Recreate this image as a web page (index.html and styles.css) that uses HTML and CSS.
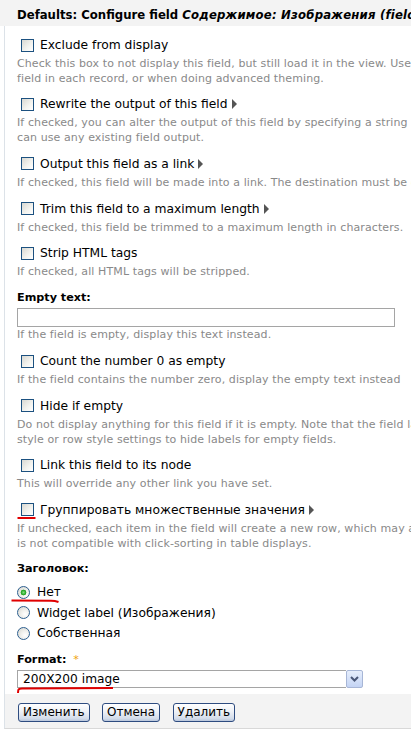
FILE: index.html
```html
<!DOCTYPE html>
<html lang="ru">
<head>
<meta charset="utf-8">
<title>Configure field</title>
<link rel="stylesheet" href="styles.css">
</head>
<body>
<div class="dialog">
  <h2 class="title">Defaults: Configure field <em>Содержимое: Изображения (field_images)</em></h2>
  <div class="panel">
    <div class="form">
      <div class="item">
        <label class="check"><span class="cb"></span>Exclude from display</label>
        <div class="desc">Check this box to not display this field, but still load it in the view. Use this option to not show a grouping<br>field in each record, or when doing advanced theming.</div>
      </div>
      <div class="item">
        <label class="check"><span class="cb"></span>Rewrite the output of this field<svg class="arrow" width="6" height="10" viewBox="0 0 6 10"><path d="M0 0 L5 5 L0 10 Z" fill="#555"/></svg></label>
        <div class="desc">If checked, you can alter the output of this field by specifying a string of text with replacement tokens that<br>can use any existing field output.</div>
      </div>
      <div class="item">
        <label class="check"><span class="cb"></span>Output this field as a link<svg class="arrow" width="6" height="10" viewBox="0 0 6 10"><path d="M0 0 L5 5 L0 10 Z" fill="#555"/></svg></label>
        <div class="desc">If checked, this field will be made into a link. The destination must be given below.</div>
      </div>
      <div class="item">
        <label class="check"><span class="cb"></span>Trim this field to a maximum length<svg class="arrow" width="6" height="10" viewBox="0 0 6 10"><path d="M0 0 L5 5 L0 10 Z" fill="#555"/></svg></label>
        <div class="desc">If checked, this field be trimmed to a maximum length in characters.</div>
      </div>
      <div class="item">
        <label class="check"><span class="cb"></span>Strip HTML tags</label>
        <div class="desc">If checked, all HTML tags will be stripped.</div>
      </div>
      <div class="item">
        <div class="label">Empty text:</div>
        <input class="text-input" type="text">
        <div class="desc tight">If the field is empty, display this text instead.</div>
      </div>
      <div class="item">
        <label class="check"><span class="cb"></span>Count the number 0 as empty</label>
        <div class="desc">If the field contains the number zero, display the empty text instead</div>
      </div>
      <div class="item">
        <label class="check"><span class="cb"></span>Hide if empty</label>
        <div class="desc">Do not display anything for this field if it is empty. Note that the field label may still be displayed. Check<br>style or row style settings to hide labels for empty fields.</div>
      </div>
      <div class="item">
        <label class="check"><span class="cb"></span>Link this field to its node</label>
        <div class="desc">This will override any other link you have set.</div>
      </div>
      <div class="item">
        <label class="check"><span class="cb"></span>Группировать множественные значения<svg class="arrow" width="6" height="10" viewBox="0 0 6 10"><path d="M0 0 L5 5 L0 10 Z" fill="#555"/></svg></label>
        <div class="desc">If unchecked, each item in the field will create a new row, which may appear to cause duplicates. This setting<br>is not compatible with click-sorting in table displays.</div>
        <svg class="mark mark-cb" width="20" height="4" viewBox="0 0 20 4"><path d="M0.5 2 L18.5 2" stroke="#e00000" stroke-width="2" fill="none"/></svg>
      </div>
      <div class="item item-radios">
        <div class="label">Заголовок:</div>
        <div class="radios">
          <label class="radio"><span class="rb on"></span>Нет<svg class="mark mark-radio" width="50" height="5" viewBox="0 0 50 5"><path d="M0.5 1.5 L40 1.8 Q44 1.8 47.5 3" stroke="#e00000" stroke-width="2" fill="none"/></svg></label>
          <label class="radio"><span class="rb"></span>Widget label (Изображения)</label>
          <label class="radio"><span class="rb"></span>Собственная</label>
        </div>
      </div>
      <div class="item item-last">
        <div class="label">Format: <span class="req">*</span></div>
        <div class="select">
          <div class="select-value">200X200 image</div>
          <div class="select-btn"><svg width="9" height="6" viewBox="0 0 9 6"><path d="M1 1 L4.5 4.5 L8 1" stroke="#4a5878" stroke-width="2" fill="none"/></svg></div>
          <svg class="mark mark-select" width="98" height="7" viewBox="0 0 98 7"><path d="M1 6 L1.3 3 Q1.8 1.6 5 1.5 L96 1" stroke="#e00000" stroke-width="2" fill="none"/></svg>
        </div>
      </div>
    </div>
    <div class="footer">
      <button class="btn" type="button">Изменить</button>
      <button class="btn" type="button">Отмена</button>
      <button class="btn" type="button">Удалить</button>
    </div>
  </div>
</div>
</body>
</html>
```

FILE: styles.css
```css
html, body {
  margin: 0;
  padding: 0;
  overflow: hidden;
  background: #fff;
}
body {
  width: 411px;
  height: 737px;
  font-family: "DejaVu Sans", Verdana, sans-serif;
  color: #000;
}
.dialog {
  width: 760px;
}
.title {
  margin: 0;
  height: 26px;
  box-sizing: border-box;
  padding: 4px 0 0 17px;
  line-height: 22px;
  font-size: 11.7px;
  font-weight: bold;
  background: #f3f3f3;
  white-space: nowrap;
}
.title em {
  font-style: italic;
  letter-spacing: 0.2px;
}
.panel {
  margin-left: 4px;
  border-left: 1px solid #dce2e8;
  border-bottom: 1px solid #d8d8d8;
}
.form {
  padding: 10px 0 0 12px;
}
.item {
  position: relative;
  margin-bottom: 9px;
}
.item-radios {
  margin-bottom: 7.7px;
}
.item-last {
  margin-bottom: 0;
  padding-bottom: 6px;
}
.check {
  display: flex;
  align-items: center;
  height: 18px;
  font-size: 12.3px;
  white-space: nowrap;
}
.cb {
  flex: none;
  width: 13px;
  height: 13px;
  box-sizing: border-box;
  border: 1px solid #1c5180;
  background: linear-gradient(135deg, #d8d8d2 0%, #f4f4f0 60%, #ffffff 100%);
  margin: 0 6px 0 4px;
}
.arrow {
  flex: none;
  margin-left: 4px;
}
.desc {
  margin-top: 3px;
  font-size: 11px;
  letter-spacing: 0.1px;
  line-height: 14.7px;
  color: #898989;
  white-space: nowrap;
}
.desc.tight {
  margin-top: 1px;
}
.label {
  height: 18px;
  line-height: 18px;
  font-size: 11.2px;
  font-weight: bold;
  white-space: nowrap;
}
.req {
  color: #f0a30a;
  font-weight: normal;
  margin-left: 3px;
}
.text-input {
  display: block;
  width: 378px;
  height: 19px;
  box-sizing: border-box;
  margin: 1.5px 0 0 0;
  padding: 0;
  border: 1px solid #a5a5a5;
  background: #fff;
}
.radios {
  margin-top: 3.5px;
}
.radio {
  position: relative;
  display: flex;
  align-items: center;
  height: 20.5px;
  font-size: 12.3px;
  white-space: nowrap;
}
.rb {
  flex: none;
  width: 13px;
  height: 13px;
  box-sizing: border-box;
  border-radius: 50%;
  border: 1px solid #2d5f8f;
  background: radial-gradient(circle at 65% 65%, #ffffff 0%, #eeeeea 45%, #d2d2cc 100%);
  margin-right: 7px;
}
.rb.on {
  background:
    radial-gradient(circle at 50% 50%, #7fdc7f 0, #2fae2f 2px, #1f9a1f 2.6px, transparent 3.2px),
    radial-gradient(circle at 65% 65%, #ffffff 0%, #eeeeea 45%, #d2d2cc 100%);
}
.select {
  position: relative;
  display: flex;
  width: 346px;
  height: 18px;
  margin-top: 1.3px;
}
.select-value {
  flex: 1;
  border: 1px solid #a5a5a5;
  border-right: none;
  font-size: 12.2px;
  line-height: 16px;
  padding-left: 5px;
  white-space: nowrap;
}
.select-btn {
  flex: none;
  width: 17px;
  box-sizing: border-box;
  border: 1px solid #a7b6d6;
  border-radius: 2px;
  background: linear-gradient(#e6eefc, #c4d4f4);
  display: flex;
  align-items: center;
  justify-content: center;
}
.mark {
  position: absolute;
  pointer-events: none;
}
.mark-cb {
  left: 0;
  top: 15px;
}
.mark-radio {
  left: -6px;
  top: 17.5px;
}
.mark-select {
  left: 0;
  top: 17px;
}
.footer {
  display: flex;
  gap: 12.5px;
  height: 34px;
  box-sizing: border-box;
  padding: 9px 0 6px 13px;
  background: #f3f3f3;
}
.btn {
  height: 19px;
  margin: 0;
  padding: 0 4px;
  font-family: "DejaVu Sans", Verdana, sans-serif;
  font-size: 12px;
  line-height: 17px;
  color: #000;
  border: 1px solid #2e4c80;
  border-radius: 3px;
  background: linear-gradient(#ffffff 0%, #eef1f6 45%, #d3dcea 85%, #b9c6dc 100%);
}
```
